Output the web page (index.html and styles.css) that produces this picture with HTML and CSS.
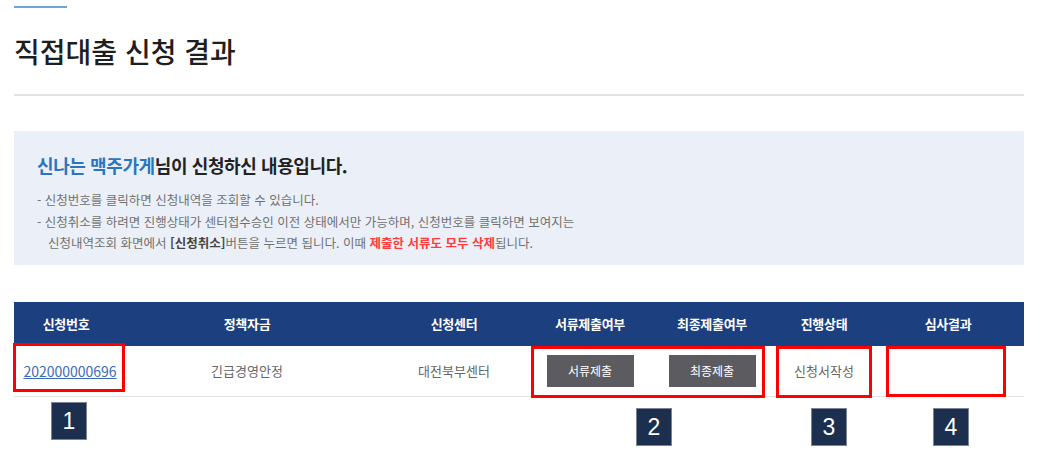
FILE: index.html
```html
<!DOCTYPE html>
<html lang="ko">
<head>
  <meta charset="UTF-8">
  <meta name="viewport" content="width=device-width, initial-scale=1.0">
  <title>직접대출 신청 결과</title>
  <link rel="stylesheet" href="styles.css">
</head>
<body>
  <div class="page">
    <div class="accent"></div>
    <h1 class="page-title">직접대출 신청 결과</h1>
    <hr class="divider">

    <!-- 안내 박스 -->
    <div class="notice">
      <h2 class="notice-title"><span class="hl">신나는 맥주가게</span>님이 신청하신 내용입니다.</h2>
      <ul class="notice-list">
        <li>- 신청번호를 클릭하면 신청내역을 조회할 수 있습니다.</li>
        <li>- 신청취소를 하려면 진행상태가 센터접수승인 이전 상태에서만 가능하며, 신청번호를 클릭하면 보여지는<br>
          <span class="indent">신청내역조회 화면에서 <b>[신청취소]</b>버튼을 누르면 됩니다. 이때 <em class="warn">제출한 서류도 모두 삭제</em>됩니다.</span></li>
      </ul>
    </div>

    <!-- 결과 테이블 -->
    <div class="result">
      <div class="row head">
        <div class="cell">신청번호</div>
        <div class="cell">정책자금</div>
        <div class="cell">신청센터</div>
        <div class="cell">서류제출여부</div>
        <div class="cell">최종제출여부</div>
        <div class="cell">진행상태</div>
        <div class="cell">심사결과</div>
      </div>
      <div class="row body">
        <div class="cell no"><a href="#" class="apply-no">202000000696</a></div>
        <div class="cell">긴급경영안정</div>
        <div class="cell">대전북부센터</div>
        <div class="cell"><button class="btn">서류제출</button></div>
        <div class="cell"><button class="btn">최종제출</button></div>
        <div class="cell">신청서작성</div>
        <div class="cell"></div>
      </div>

      <!-- 설명용 표시 -->
      <div class="mark mark-1"></div>
      <div class="mark mark-2"></div>
      <div class="mark mark-3"></div>
      <div class="mark mark-4"></div>
      <div class="badge badge-1">1</div>
      <div class="badge badge-2">2</div>
      <div class="badge badge-3">3</div>
      <div class="badge badge-4">4</div>
    </div>
  </div>
</body>
</html>
```

FILE: styles.css
```css
/* 기본 */
body {
  margin: 0;
  background: #ffffff;
  font-family: "Noto Sans CJK KR", "Noto Sans", sans-serif;
  color: #333333;
}
.page {
  padding: 6px 18px 0 14px;
}
.accent {
  width: 53px;
  height: 2px;
  background-color: #6fa3dc;
}
.page-title {
  margin: 23px 0 0;
  font-size: 28px;
  line-height: 40px;
  font-weight: 500;
  color: #1e1e1e;
}
.divider {
  margin: 23px 0 0;
  border: none;
  height: 2px;
  background-color: #e4e4e4;
}

/* 안내 박스 */
.notice {
  margin-top: 35px;
  background-color: #ebf0f8;
  padding: 22px 23px 11px;
}
.notice-title {
  margin: 0;
  font-size: 18px;
  line-height: 24px;
  font-weight: 700;
  letter-spacing: -0.4px;
  color: #222222;
}
.notice-title .hl {
  color: #2b74c0;
}
.notice-list {
  list-style: none;
  margin: 12px 0 0;
  padding: 0;
  font-size: 12.5px;
  line-height: 21.5px;
  color: #707070;
}
.notice-list b {
  color: #444444;
}
.indent {
  padding-left: 11px;
}
.warn {
  font-style: normal;
  font-weight: 700;
  color: #ff3b3b;
}

/* 결과 테이블 */
.result {
  position: relative;
  margin-top: 37px;
  height: 150px;
}
.row {
  display: grid;
  grid-template-columns: 104px 258px 156px 116px 128px 96px 152px;
  align-items: center;
}
.cell {
  text-align: center;
  white-space: nowrap;
  font-size: 13px;
}
.head {
  height: 44px;
  background-color: #1b3f7f;
}
.head .cell {
  color: #ffffff;
  font-weight: 700;
  letter-spacing: -0.3px;
}
.body {
  height: 50px;
  border-bottom: 1px solid #e2e2e2;
}
.body .cell {
  color: #666666;
}
.body .cell.no {
  padding-left: 8px;
}
.apply-no {
  font-size: 14px;
  color: #3a6cb5;
  text-decoration: underline;
}
.btn {
  width: 87px;
  height: 32px;
  border: none;
  background-color: #5b5b60;
  color: #ffffff;
  font-family: inherit;
  font-size: 12px;
  padding: 0;
}

/* 빨간 표시 박스 */
.mark {
  position: absolute;
  box-sizing: border-box;
  border: 3px solid #ff0000;
}
.mark-1 { left: -1px; top: 41px; width: 112px; height: 49px; }
.mark-2 { left: 517px; top: 44px; width: 234px; height: 52px; }
.mark-3 { left: 762px; top: 44px; width: 96px; height: 52px; }
.mark-4 { left: 872px; top: 44px; width: 120px; height: 51px; }

/* 번호 배지 */
.badge {
  position: absolute;
  box-sizing: border-box;
  width: 36px;
  height: 38px;
  background-color: #1c2f4e;
  border: 1px solid #7a8494;
  color: #ffffff;
  font-family: "Liberation Sans", Arial, sans-serif;
  font-size: 23px;
  line-height: 36px;
  text-align: center;
}
.badge-1 { left: 37px; top: 100px; }
.badge-2 { left: 622px; top: 106px; }
.badge-3 { left: 797px; top: 106px; }
.badge-4 { left: 919px; top: 106px; }
```
